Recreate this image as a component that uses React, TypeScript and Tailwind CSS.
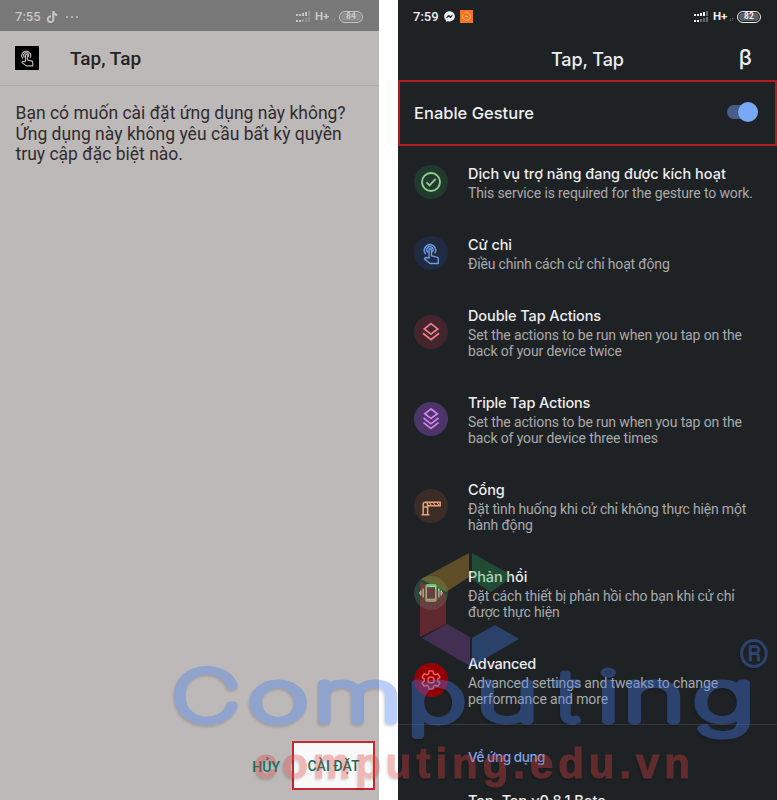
import React from "react";
import { FaTiktok, FaFacebookMessenger } from "react-icons/fa";

const ROBOTO = "font-['Roboto','Noto_Sans',sans-serif]";
const TITLE = "font-['Inter','Noto_Sans',sans-serif]";

function HandIcon({ className }: { className: string }) {
  return (
    <svg viewBox="0 0 20 24" className={className} fill="none" stroke="currentColor" strokeWidth="1.6" strokeLinejoin="round" strokeLinecap="round">
      <path d="M3.900 11.800A6.300 6.300 0 1 1 14.600 10.600" />
      <path d="M6.200 9.800A3.600 3.600 0 1 1 11.800 9.300" />
      <path d="M7.800 16.500V7.200a1.350 1.350 0 0 1 2.700 0v6.800l6.700 1.700q1 .4 .9 1.400V22.600H9L2.700 17.500l1.300-1.600z" />
    </svg>
  );
}

function CheckIcon() {
  return (
    <svg viewBox="0 0 24 24" className="size-6" fill="none" stroke="currentColor" strokeWidth="1.9">
      <circle cx="12" cy="12" r="9" />
      <path d="m7.5 12.4 3 3 6.2-6.5" />
    </svg>
  );
}

function StackIcon({ triple }: { triple?: boolean }) {
  return triple ? (
    <svg viewBox="0 0 24 24" className="size-6" fill="none" stroke="currentColor" strokeWidth="1.7">
      <path d="m12 2 6.300 4.700-6.300 4.700-6.300-4.700z" />
      <path d="m4.500 11 7.500 5.800 7.500-5.800" />
      <path d="m4.500 15.700 7.500 5.800 7.500-5.800" />
    </svg>
  ) : (
    <svg viewBox="0 0 24 24" className="size-6" fill="none" stroke="currentColor" strokeWidth="1.8">
      <path d="m12 3.600 6.700 5.300-6.700 5.300-6.700-5.300z" />
      <path d="m4 13.200 8 6.400 8-6.400" />
    </svg>
  );
}

function GateIcon() {
  return (
    <svg viewBox="0 0 24 24" className="size-6" fill="none" stroke="currentColor" strokeWidth="1.500">
      <path d="M2.500 20.700h8M4.200 20V10.500a2.200 2.200 0 0 1 4.400 0V20M4.200 13h4.400M6.500 8.300H21.200v3.400H8.600" />
      <path strokeWidth="1.100" d="m10.500 8.700 1.800 2.600m2-2.600 1.800 2.600m2-2.600 1.800 2.600" />
    </svg>
  );
}

function VibrateIcon() {
  return (
    <svg viewBox="0 0 24 24" className="size-6" fill="none" stroke="currentColor" strokeWidth="1.600">
      <rect x="7.200" y="4" width="9.600" height="16" rx="1" />
      <path d="M7.200 5.500h9.600M7.200 18.500h9.600M4.200 7.500v9M1.800 9.500v5M19.800 7.500v9M22.200 9.500v5M.2 11.300v1.500M23.800 11.300v1.500" />
    </svg>
  );
}

function GearIcon() {
  return (
    <svg viewBox="0 0 24 24" className="size-6" fill="none" stroke="currentColor" strokeWidth="1.5" strokeLinejoin="round">
      <path d="M10 3h4l.5 2.8 1.7 1 2.7-1 2 3.5-2.2 1.8v2l2.2 1.8-2 3.4-2.7-1-1.7 1L14 21h-4l-.5-2.7-1.7-1-2.7 1-2-3.4 2.2-1.8v-2L3.100 9.300l2-3.500 2.700 1 1.700-1z" />
      <circle cx="12" cy="12" r="3.100" />
    </svg>
  );
}

function Signal() {
  return (
    <span className="flex w-[15px] flex-col gap-[1px]">
      {[0, 1].map((r) => (
        <span key={r} className="flex h-[5px] items-end gap-[1px]">
          {[0, 1, 2, 3, 4].map((i) => (
            <span key={i} className={`w-[2px] ${i < 2 ? "h-[2px]" : i < 3 ? "h-[3px]" : i < 4 ? "h-[4px]" : "h-[5px]"} bg-current ${i > (r ? 1 : 3) ? "opacity-35" : ""}`} />
          ))}
        </span>
      ))}
    </span>
  );
}

function StatusRight({ level }: { level: string }) {
  return (
    <div className="flex items-center">
      <Signal />
      <span className="ml-[4px] w-[15px] text-[11.500px] leading-none font-bold">H+</span>
      <span className="mt-[5px] ml-[1px] w-[6px] text-[5px] leading-none opacity-60">↓↑</span>
      <span className="ml-[2px] flex h-[12px] w-[24px] items-center justify-center rounded-full border border-current p-[1px]">
        <span className="flex h-full w-full items-center justify-center rounded-full bg-current/30">
          <span className="text-[8.500px] leading-none font-bold">{level}</span>
        </span>
      </span>
    </div>
  );
}

type Item = {
  title: string;
  tracking: string;
  lines: string[];
  lineTracking: string;
  height: string;
  disc: string;
  icon: React.ReactNode;
};

const EN = "tracking-[-0.13px]";
const VI = "tracking-[-0.17px]";

const items: Item[] = [
  { title: "Dịch vụ trợ năng đang được kích hoạt", tracking: "tracking-[-0.01px]", lineTracking: EN, lines: ["This service is required for the gesture to work."], height: "h-[71px]", disc: "bg-[#203a2e] text-[#95c893]", icon: <CheckIcon /> },
  { title: "Cử chỉ", tracking: "tracking-[-0.1px]", lineTracking: VI, lines: ["Điều chỉnh cách cử chỉ hoạt động"], height: "h-[71px]", disc: "bg-[#202b43] text-[#6c9bdf]", icon: <HandIcon className="mt-[2px] h-[22px] w-[18px]" /> },
  { title: "Double Tap Actions", tracking: "tracking-[-0.1px]", lineTracking: EN, lines: ["Set the actions to be run when you tap on the", "back of your device twice"], height: "h-[87px]", disc: "bg-[#43252d] text-[#ee7d8e]", icon: <StackIcon /> },
  { title: "Triple Tap Actions", tracking: "tracking-[-0.15px]", lineTracking: EN, lines: ["Set the actions to be run when you tap on the", "back of your device three times"], height: "h-[87px]", disc: "bg-[#4c3669] text-[#d683f0]", icon: <StackIcon triple /> },
  { title: "Cổng", tracking: "tracking-[-0.1px]", lineTracking: VI, lines: ["Đặt tình huống khi cử chỉ không thực hiện một", "hành động"], height: "h-[87px]", disc: "bg-[#3c2c28] text-[#e8a27b]", icon: <GateIcon /> },
  { title: "Phản hồi", tracking: "tracking-[-0.1px]", lineTracking: VI, lines: ["Đặt cách thiết bị phản hồi cho bạn khi cử chỉ", "được thực hiện"], height: "h-[87px]", disc: "bg-[#28483a] text-[#86e5a2]", icon: <VibrateIcon /> },
  { title: "Advanced", tracking: "tracking-[-0.3px]", lineTracking: EN, lines: ["Advanced settings and tweaks to change", "performance and more"], height: "h-[87px]", disc: "bg-[#950006] text-[#f45b54]", icon: <GearIcon /> },
];

// Each letter: glyph, left x, baseline y, horizontal scale
const markLetters: [string, number, number, number][] = [
  ["C", 172, 721, 1.34],
  ["o", 248, 721, 1.49],
  ["m", 313.5, 721, 1.46],
  ["p", 407, 721, 1.45],
  ["u", 476, 721, 1.53],
  ["t", 557, 721, 1.25],
  ["i", 597, 721, 1.5],
  ["n", 623, 721, 1.52],
  ["g", 693, 721, 1.52],
];

function Watermark() {
  return (
    <svg viewBox="0 0 777 800" className="pointer-events-none absolute inset-0 h-[800px] w-[777px]">
      <g opacity="0.34">
        <path d="M421 579 469 553V577L446 592z" fill="#dba02c" />
        <path d="M472 553 513 576 491 592 472 580z" fill="#279c52" />
        <path d="M420 582 446 594V624L420 637z" fill="#dc3544" />
        <path d="M422 638 447 624 470 637V666z" fill="#8a49aa" />
        <path d="M472 638 495 625 519 639 472 666z" fill="#417df0" />
      </g>
      <g opacity="0.36" className="drop-shadow-[-1px_2px_1px_#00000066]" fill="#417df0" stroke="#417df0" strokeLinejoin="round" strokeLinecap="round">
        {markLetters.map(([ch, x, y, s]) => (
          <text key={x} className="font-['Inter'] font-thin" transform={`translate(${x} ${y}) scale(${s} 1)`} fontSize="70" strokeWidth="7">{ch}</text>
        ))}
        <text x="739" y="667" className="font-['Roboto'] font-thin" fontSize="37" strokeWidth="2">®</text>
      </g>
      <g opacity="0.35" className="drop-shadow-[-1px_2px_1px_#00000066] font-['Liberation_Sans',sans-serif] font-bold" fill="#e04040" stroke="#e04040" strokeWidth="1">
        <text x="254" y="778" fontSize="42" textLength="436" lengthAdjust="spacing">computing.edu.vn</text>
      </g>
    </svg>
  );
}

export default function App() {
  return (
    <div className={`relative flex h-[800px] w-[777px] justify-between overflow-hidden bg-white whitespace-nowrap ${ROBOTO}`}>
      <section className="flex h-full w-[379px] flex-col bg-[#bdb9b9]">
        <div className="flex h-[31px] shrink-0 items-center bg-[#787878] pt-[2px] pr-[16px] pl-[15px] text-[#c6c6c6]">
          <span className="w-[31px] text-[13px] font-medium">7:55</span>
          <FaTiktok className="size-[12px]" />
          <span className="ml-[8px] flex flex-1 gap-[3px]">
            {[0, 1, 2].map((n) => <span key={n} className="size-[2px] rounded-full bg-current" />)}
          </span>
          <StatusRight level="84" />
        </div>
        <header className="flex h-[55px] shrink-0 items-center border-b border-[#afabab] pl-[15px]">
          <span className="flex size-[24px] items-center justify-center bg-black text-[#bdb9b9]">
            <HandIcon className="h-[17px] w-[14px]" />
          </span>
          <h1 className="ml-[31px] pt-[2px] text-[19px] font-medium text-[#252223]">Tap, Tap</h1>
        </header>
        <p className="flex-1 pt-[17px] pl-[15.500px] text-[17.500px] leading-[20.5px] text-[#302c2d]">
          <span className="block">Bạn có muốn cài đặt ứng dụng này không?</span>
          <span className="block tracking-[0.03px]">Ứng dụng này không yêu cầu bất kỳ quyền</span>
          <span className="block">truy cập đặc biệt nào.</span>
        </p>
        <footer className="flex h-[59px] shrink-0 items-start justify-end pr-[4px] text-[14px] font-medium text-[#16705e]">
          <button className="mr-[12px] h-[52px]">HỦY</button>
          <button className="h-[49px] w-[83px] border-2 border-[#c9262e] bg-[#f9f9f9] pt-[2px]">CÀI ĐẶT</button>
        </footer>
      </section>

      <section className="flex h-full w-[379px] flex-col bg-[#1f2225] text-[#eceeef]">
        <div className="flex h-[31px] shrink-0 items-center pt-[2px] pr-[16px] pl-[15px]">
          <span className="w-[31px] text-[13px] font-medium">7:59</span>
          <FaFacebookMessenger className="size-[11px]" />
          <span className="ml-[5px] flex size-[13px] items-center justify-center bg-[#ef7627] text-[#ffb266]">
            <svg viewBox="0 0 12 12" className="size-[11px]" fill="none" stroke="currentColor"><path d="M2.400 3.500A4.300 4.300 0 1 0 9.600 3.500M3.500 2.300Q6 .8 8.500 2.300M4.300 6h3.400" /></svg>
          </span>
          <span className="flex-1" />
          <StatusRight level="82" />
        </div>
        <header className={`flex h-[49px] shrink-0 items-center pr-[25px] pt-[8px] pl-[153px] ${TITLE}`}>
          <h1 className="flex-1 text-[18px] font-medium tracking-[-0.1px]">Tap, Tap</h1>
          <span className="pb-[6px] text-[22px] leading-none font-medium">β</span>
        </header>
        <div className={`flex h-[66px] shrink-0 items-center justify-between border-2 border-[#b31b20] pr-[17px] pl-[14px] ${TITLE}`}>
          <span className="text-[16.500px] font-medium">Enable Gesture</span>
          <span className="mb-[3px] flex h-[14px] w-[31px] items-center justify-end rounded-full bg-[#475c88]">
            <span className="size-[20px] shrink-0 rounded-full bg-[#78a9f7]" />
          </span>
        </div>
        <ul className="shrink-0 pb-[1px]">
          {items.map((it) => (
            <li key={it.title} className={`flex items-center pl-[16px] ${it.height}`}>
              <span className={`flex size-[34px] shrink-0 items-center justify-center rounded-full ${it.disc}`}>{it.icon}</span>
              <div className="ml-[20px] pt-[1px]">
                <h2 className={`mb-[1px] text-[14.500px] leading-[20px] font-medium ${TITLE} ${it.tracking}`}>{it.title}</h2>
                {it.lines.map((text) => (
                  <p key={text} className={`text-[14px] leading-[16px] text-[#a7aaac] ${it.lineTracking}`}>{text}</p>
                ))}
              </div>
            </li>
          ))}
        </ul>
        <div className="flex-1 border-t border-[#373a3d] pt-[22px] pl-[70px]">
          <h3 className={`text-[13.500px] leading-[20px] font-medium tracking-[-0.45px] text-[#7fa5ea] ${TITLE}`}>Về ứng dụng</h3>
          <p className={`mt-[24px] text-[14.500px] leading-[20px] font-medium ${TITLE}`}>Tap, Tap v0.8.1 Beta</p>
        </div>
      </section>
      <Watermark />
    </div>
  );
}
